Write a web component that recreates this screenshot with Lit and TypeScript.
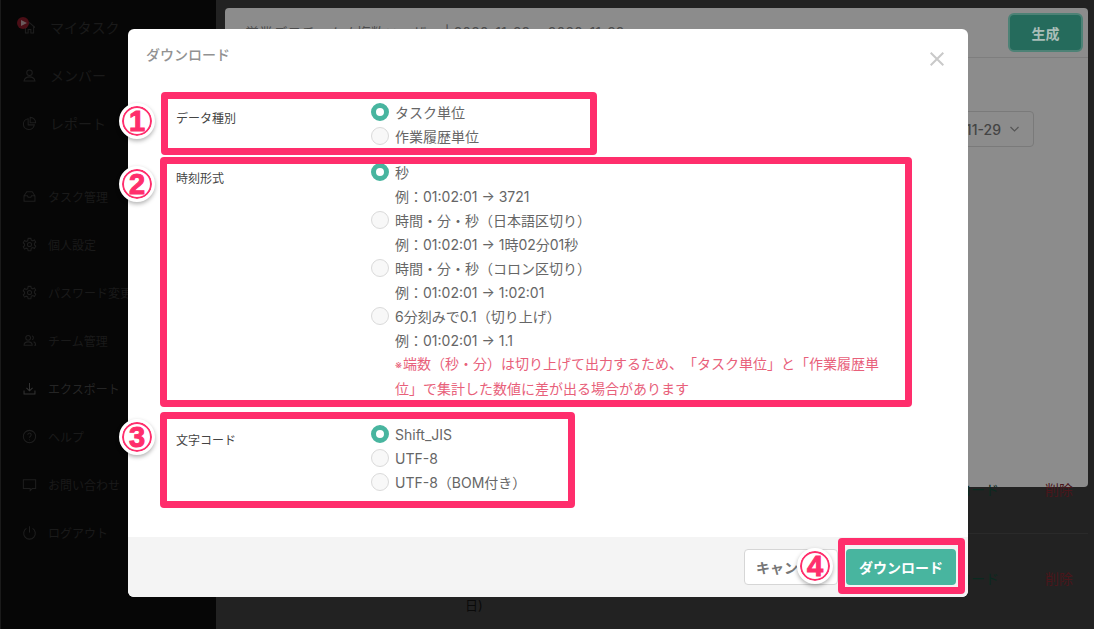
import { LitElement, html, css, svg } from "lit";
import { customElement } from "lit/decorators.js";

const icons: Record<string, unknown> = {
  home: svg`<path d="M3 11l8-7 8 7M5 10v9h4v-5h4v5h4v-9"/>`,
  user: svg`<circle cx="11" cy="7" r="4"/><path d="M3 19c1-5 4-6 8-6s7 1 8 6z"/>`,
  report: svg`<path d="M9 4a8 8 0 1 0 9 9H9z"/><path d="M12 2a8 8 0 0 1 8 8h-8z"/>`,
  inbox: svg`<path d="M3 10l4-6h8l4 6v8H3zM3 10h5l1 2h4l1-2h5"/>`,
  gear: svg`<circle cx="11" cy="11" r="3"/><path d="M9 2h4l.6 2.6 2.3 1 2.3-1.4 2 3.4-2 1.7v2.4l2 1.7-2 3.4-2.3-1.4-2.3 1L13 20H9l-.6-2.6-2.3-1-2.3 1.4-2-3.4 2-1.7V10.300l-2-1.700 2-3.400 2.300 1.400 2.300-1z"/>`,
  team: svg`<circle cx="9" cy="7" r="3.500"/><path d="M3 18c0-4 3-5 6-5s6 1 6 5zM15 4a3.500 3.500 0 0 1 0 6M17 13c2 .5 3 2 3 5h-2"/>`,
  download: svg`<path d="M11 3v11M6.500 10l4.500 4.500 4.500-4.500M3 14v5h16v-5"/>`,
  help: svg`<circle cx="11" cy="11" r="9"/><path d="M8.500 8.500a2.500 2.500 0 1 1 4 2c-1 .8-1.500 1.200-1.500 2.500M11 15.500v1"/>`,
  chat: svg`<path d="M2 4h18v13h-5l-3 3v-3H2z"/>`,
  power: svg`<path d="M11 2v9M6.500 5a8.500 8.500 0 1 0 9 0"/>`,
};

@customElement("app-root")
export class AppRoot extends LitElement {
  static styles = css`
    :host {
      display: block;
      position: relative;
      width: 1094px;
      height: 629px;
      overflow: hidden;
      font-family: "Inter", "Noto Sans CJK JP", "Noto Sans", sans-serif;
      text-spacing-trim: space-all;
      background: #222;
    }
    .shell { display: flex; height: 100%; }
    .side {
      position: relative;
      width: 215px;
      flex: none;
      background: #060606;
      border-left: 1px solid #1a1a1a;
      box-sizing: content-box;
      padding-top: 3px;
    }
    .nav { display: flex; flex-direction: column; }
    .nav.second { margin-top: 25px; }
    .item {
      display: flex;
      align-items: center;
      height: 48px;
      padding-left: 20px;
      color: #1a1a1a;
      white-space: nowrap;
    }
    .nav.first .item { font-size: 14px; gap: 13px; }
    .second .item { font-size: 12px; gap: 11px; }
    .item svg { width: 15px; height: 15px; fill: none; stroke: #1e1e1e; stroke-width: 1.500; flex: none; margin-left: 1px; }
    .item.on { color: #252525; }
    .item.on svg { stroke: #333; }
    .rec {
      position: absolute;
      left: 16px;
      top: 17px;
      width: 12px;
      height: 12px;
      border-radius: 50%;
      background: #4a0e16;
    }
    .rec::after {
      content: "";
      position: absolute;
      left: 4px;
      top: 3px;
      border-left: 6px solid #6a5a5c;
      border-top: 3px solid transparent;
      border-bottom: 3px solid transparent;
    }
    .main { flex: 1; padding: 8px 6px 0 9px; min-width: 0; }
    .panel {
      height: 479px;
      background: #8c8c8c;
      border-radius: 4px;
    }
    .panel-head {
      display: flex;
      align-items: center;
      justify-content: space-between;
      height: 49px;
      padding: 0 5px 0 20px;
      border-bottom: 1px solid #7e7e7e;
      color: #4d4d4d;
      font-size: 14px;
    }
    .panel-title { position: relative; top: -1px; letter-spacing: .1px; }
    .gen {
      width: 75px;
      height: 39px;
      box-sizing: border-box;
      border: 2px solid #4d8276;
      border-radius: 6px;
      background: #256b5c;
      color: #a9bdb8;
      font-weight: 700;
      font-size: 14px;
      display: flex;
      align-items: center;
      justify-content: center;
    }
    .panel-body { display: flex; justify-content: flex-end; padding: 53px 54px 0 0; }
    .select {
      width: 120px;
      height: 36px;
      box-sizing: border-box;
      border: 1px solid #7a7a7a;
      border-radius: 4px;
      color: #444;
      font-size: 14px;
      font-weight: 500;
      display: flex;
      align-items: center;
      justify-content: flex-end;
      gap: 9px;
      padding-right: 14px;
    }
    .select svg { width: 9px; height: 6px; fill: none; stroke: #555; stroke-width: 1.200; }
    .under {
      display: flex;
      justify-content: flex-end;
      gap: 46px;
      padding-right: 15px;
      color: #0a2a20;
      font-size: 14px;
      line-height: 20px;
    }
    .under.a {
      height: 54px;
      margin-top: -7px;
      box-sizing: border-box;
      align-items: flex-start;
      border-bottom: 1px solid #2a2a2a;
    }
    .under.b { height: 90px; align-items: center; }
    .under .del { color: #4a161b; }
    .tail {
      margin-right: auto;
      margin-left: 240px;
      align-self: flex-end;
      margin-bottom: 9px;
      color: #0a0a0a;
      font-size: 13px;
    }

    .modal {
      position: absolute;
      left: 128px;
      top: 29px;
      width: 840px;
      height: 568px;
      background: #fff;
      border-radius: 6px;
      overflow: hidden;
      display: flex;
      flex-direction: column;
    }
    .m-head {
      height: 52px;
      flex: none;
      display: flex;
      align-items: center;
      justify-content: space-between;
      padding: 0 24px 0 18px;
      color: #929292;
      font-size: 14px;
      font-weight: 500;
    }
    .m-head span { position: relative; top: -1px; }
    .close { width: 14px; height: 14px; stroke: #c9c9c9; stroke-width: 2; fill: none; margin-top: 8px; }
    .m-body { flex: 1; padding: 19px 48px 0; }
    .row { display: flex; }
    .row + .row { margin-top: 12px; }
    .row.third { margin-top: 21px; }
    .label {
      width: 195px;
      flex: none;
      font-size: 12px;
      color: #444;
      line-height: 24px;
      padding-top: 7px;
    }
    .opts { width: 510px; }
    .opt {
      display: flex;
      align-items: center;
      height: 24px;
      font-size: 14px;
      color: #666;
      gap: 6px;
      white-space: nowrap;
    }
    .radio {
      width: 18px;
      height: 18px;
      box-sizing: border-box;
      border-radius: 50%;
      border: 1px solid #dadada;
      background: #f8f8f8;
      flex: none;
    }
    .radio.on { border: 5px solid #48b59f; background: #fff; }
    .ex { height: 24px; line-height: 26px; padding-left: 24px; font-size: 14px; color: #666; white-space: nowrap; }
    .note { padding-left: 24px; width: 492px; line-height: 24px; font-size: 14px; color: #e8607a; }
    .note small { font-size: 11px; margin-right: 1px; }
    .m-foot {
      height: 60px;
      flex: none;
      background: #f4f4f4;
      display: flex;
      align-items: center;
      justify-content: flex-end;
      gap: 8px;
      padding-right: 12px;
    }
    .btn {
      height: 36px;
      box-sizing: border-box;
      border-radius: 4px;
      font-size: 14px;
      font-weight: 700;
      display: flex;
      align-items: center;
      justify-content: center;
    }
    .cancel { width: 94px; background: #fff; border: 1px solid #d6d6d6; color: #777; }
    .ok { width: 110px; background: #48b59f; color: #fff; }

    .mark {
      position: absolute;
      box-sizing: border-box;
      border: 7px solid #ff2e6c;
      border-radius: 4px;
    }
    .badge {
      position: absolute;
      width: 36px;
      height: 36px;
      box-sizing: border-box;
      border-radius: 50%;
      background: #fff;
      border: 3px solid #fff;
      box-shadow: 0 2px 4px rgba(0, 0, 0, .3), inset 0 0 0 2px #ff2e6c;
      color: #ff2e6c;
      font-family: "Liberation Sans", sans-serif;
      font-size: 29px;
      font-weight: 700;
      -webkit-text-stroke: 1px #ff2e6c;
      display: flex;
      align-items: center;
      justify-content: center;
      line-height: 1;
    }
  `;

  private icon(n: string) {
    return html`<svg viewBox="0 0 22 22">${icons[n]}</svg>`;
  }

  private item(icon: string, text: string, on = false) {
    return html`<div class="item ${on ? "on" : ""}">${this.icon(icon)}<span>${text}</span></div>`;
  }

  private opt(text: string, on = false) {
    return html`<div class="opt"><span class="radio ${on ? "on" : ""}"></span><span>${text}</span></div>`;
  }

  render() {
    return html`
      <div class="shell">
        <aside class="side">
          <div class="nav first">
            ${this.item("home", "マイタスク")}
            ${this.item("user", "メンバー")}
            ${this.item("report", "レポート")}
          </div>
          <div class="nav second">
            ${this.item("inbox", "タスク管理")}
            ${this.item("gear", "個人設定")}
            ${this.item("gear", "パスワード変更")}
            ${this.item("team", "チーム管理")}
            ${this.item("download", "エクスポート", true)}
            ${this.item("help", "ヘルプ")}
            ${this.item("chat", "お問い合わせ")}
            ${this.item("power", "ログアウト")}
          </div>
          <span class="rec"></span>
        </aside>
        <main class="main">
          <section class="panel">
            <div class="panel-head">
              <span class="panel-title">営業デモチーム / 複数ユーザー | 2020-11-29 ~ 2020-11-29</span>
              <div class="gen">生成</div>
            </div>
            <div class="panel-body">
              <div class="select">2020-11-29
                <svg viewBox="0 0 9 6"><path d="M.5 1l4 4 4-4" /></svg>
              </div>
            </div>
          </section>
          <div class="under a"><span>ダウンロード</span><span class="del">削除</span></div>
          <div class="under b"><span class="tail">日)</span><span>ダウンロード</span><span class="del">削除</span></div>
        </main>
      </div>

      <div class="modal">
        <div class="m-head">
          <span>ダウンロード</span>
          <svg class="close" viewBox="0 0 14 14"><path d="M.7.7l12.600 12.600M13.300.7L.7 13.300" /></svg>
        </div>
        <div class="m-body">
          <div class="row">
            <div class="label">データ種別</div>
            <div class="opts">${this.opt("タスク単位", true)}${this.opt("作業履歴単位")}</div>
          </div>
          <div class="row">
            <div class="label">時刻形式</div>
            <div class="opts">
              ${this.opt("秒", true)}
              <div class="ex">例：01:02:01 → 3721</div>
              ${this.opt("時間・分・秒（日本語区切り）")}
              <div class="ex">例：01:02:01 → 1時02分01秒</div>
              ${this.opt("時間・分・秒（コロン区切り）")}
              <div class="ex">例：01:02:01 → 1:02:01</div>
              ${this.opt("6分刻みで0.1（切り上げ）")}
              <div class="ex">例：01:02:01 → 1.1</div>
              <div class="note"><small>※</small>端数（秒・分）は切り上げて出力するため、「タスク単位」と「作業履歴単位」で集計した数値に差が出る場合があります</div>
            </div>
          </div>
          <div class="row third">
            <div class="label">文字コード</div>
            <div class="opts">${this.opt("Shift_JIS", true)}${this.opt("UTF-8")}${this.opt("UTF-8（BOM付き）")}</div>
          </div>
        </div>
        <div class="m-foot">
          <div class="btn cancel">キャンセル</div>
          <div class="btn ok">ダウンロード</div>
        </div>
      </div>

      <div class="mark" style="left:161px;top:92px;width:436px;height:63px"></div>
      <div class="mark" style="left:160px;top:157px;width:752px;height:250px"></div>
      <div class="mark" style="left:160px;top:412px;width:415px;height:96px"></div>
      <div class="mark" style="left:838px;top:538px;width:127px;height:56px"></div>
      <div class="badge" style="left:119px;top:103px">1</div>
      <div class="badge" style="left:119px;top:166px">2</div>
      <div class="badge" style="left:119px;top:419px">3</div>
      <div class="badge" style="left:797px;top:548px">4</div>
    `;
  }
}
